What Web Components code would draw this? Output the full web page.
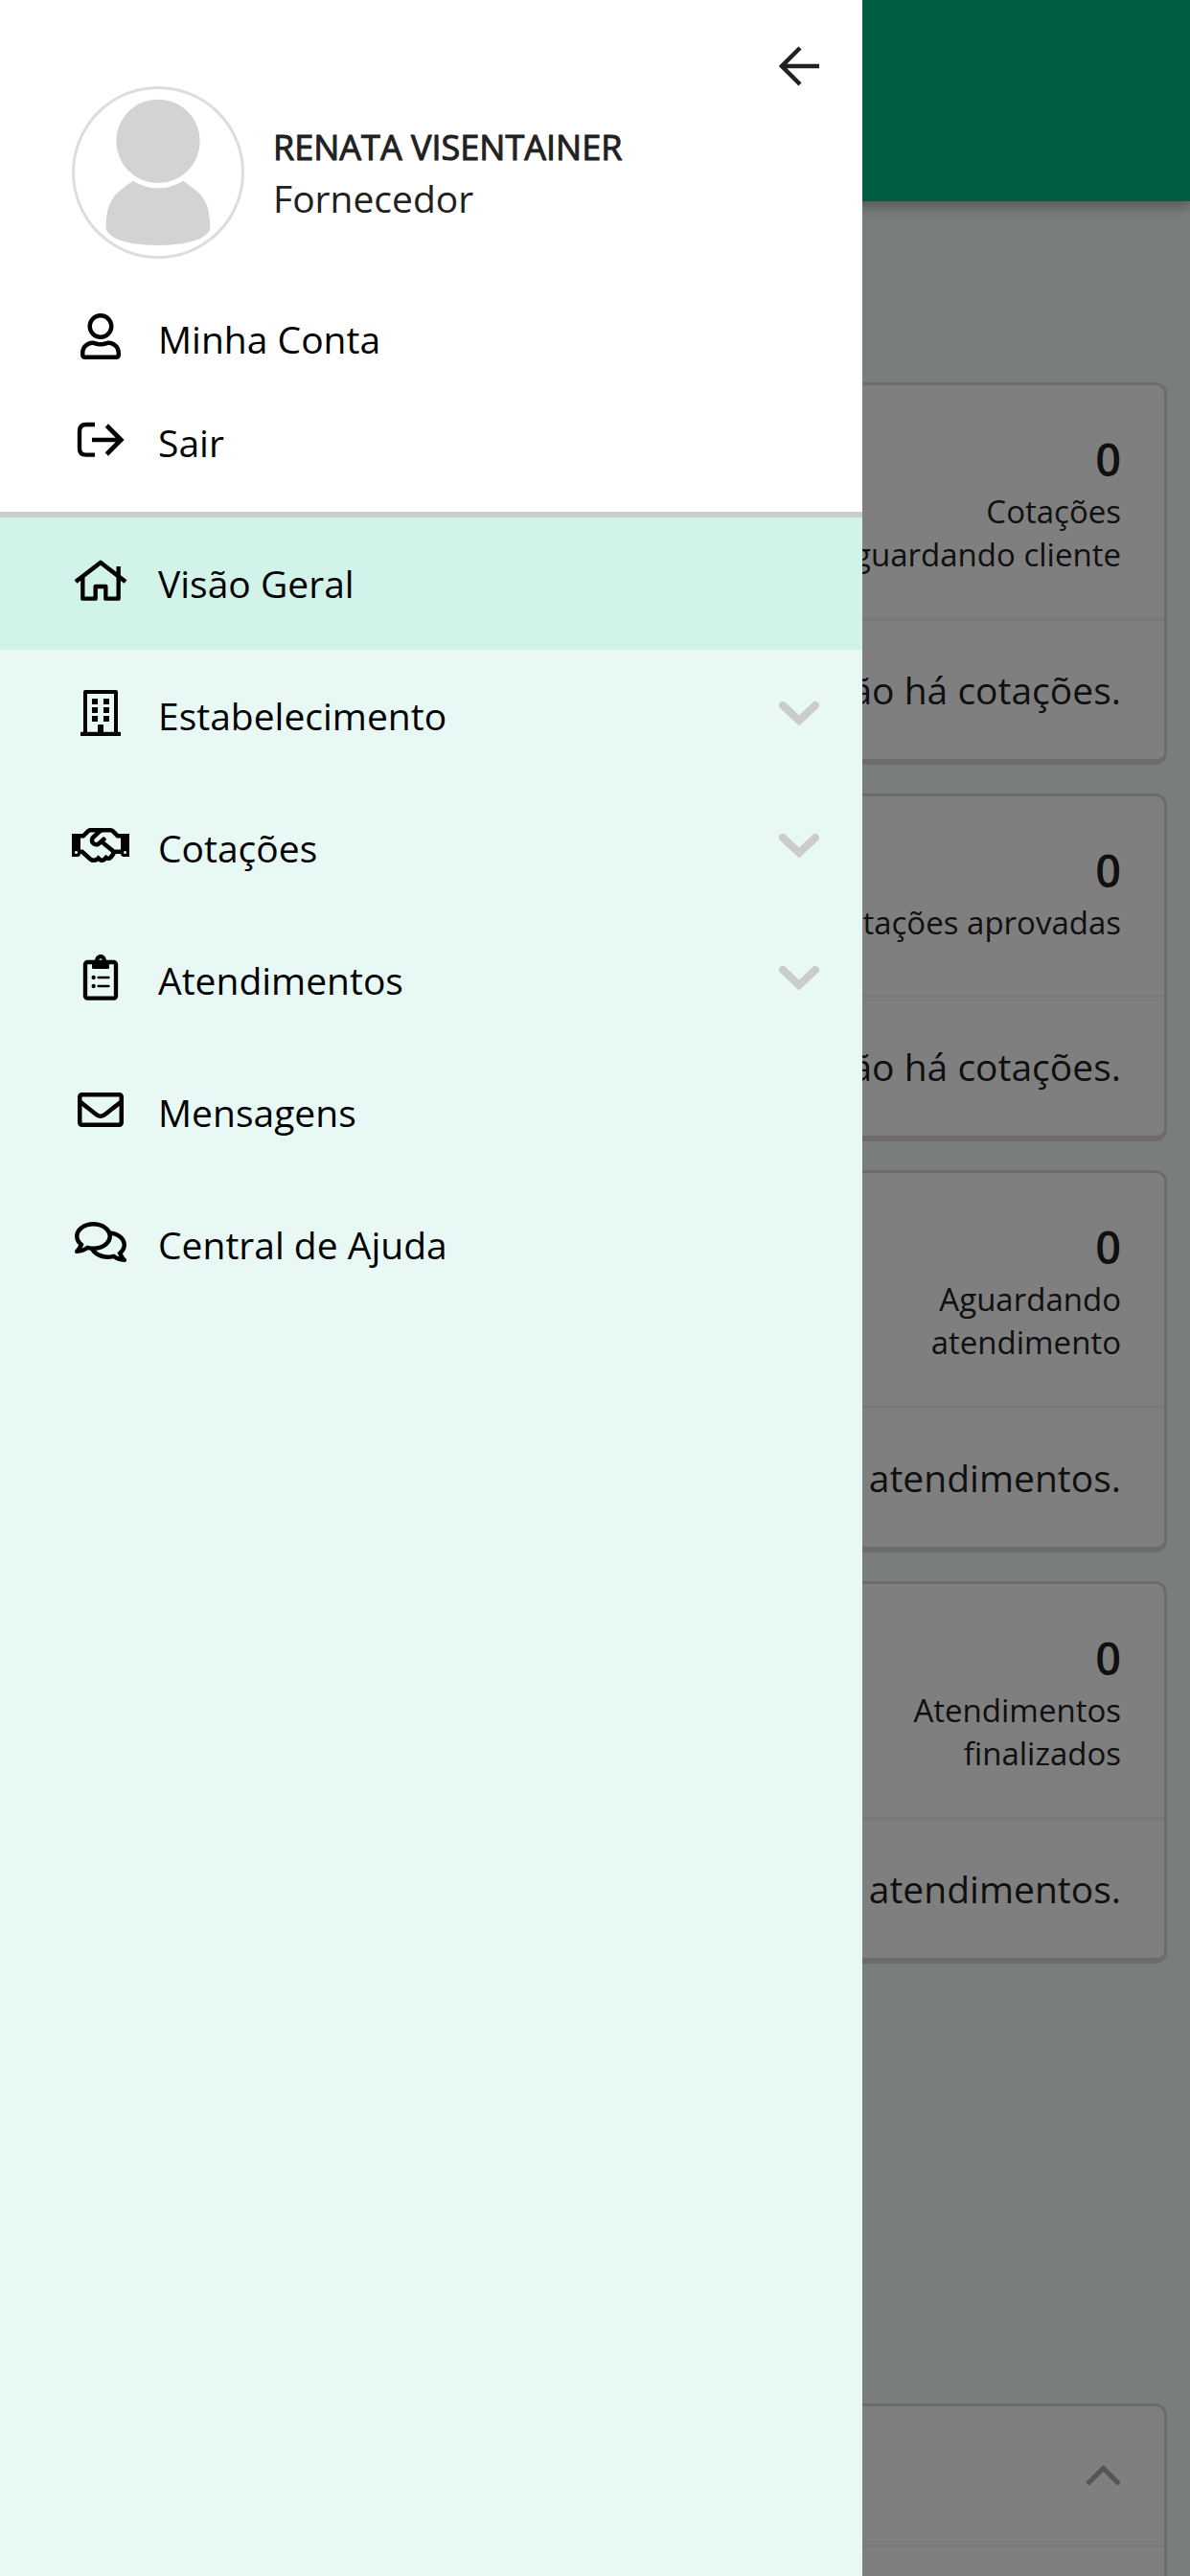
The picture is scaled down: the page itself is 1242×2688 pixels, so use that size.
<!DOCTYPE html>
<html lang="pt-BR">
<head>
<meta charset="utf-8">
<meta name="viewport" content="width=device-width, initial-scale=1">
<title>Visão Geral</title>
<style>
  body { margin: 0; font: 39px/54px "Open Sans", "Noto Sans", sans-serif; color: #212121; }
</style>
</head>
<body>
<app-shell>
  <summary-card slot="content" count="0" label="Cotações aguardando cliente">Não há cotações.</summary-card>
  <summary-card slot="content" count="0" label="Cotações aprovadas">Não há cotações.</summary-card>
  <summary-card slot="content" count="0" label="Aguardando atendimento">Não há atendimentos.</summary-card>
  <summary-card slot="content" count="0" label="Atendimentos finalizados">Não há atendimentos.</summary-card>
  <collapse-panel slot="content"></collapse-panel>

  <side-drawer slot="drawer">
    <user-profile slot="account" name="RENATA VISENTAINER">Fornecedor</user-profile>
    <menu-item slot="account" icon="user" compact>Minha Conta</menu-item>
    <menu-item slot="account" icon="exit" compact>Sair</menu-item>
    <menu-item icon="home" active>Visão Geral</menu-item>
    <menu-item icon="building" expandable>Estabelecimento</menu-item>
    <menu-item icon="handshake" expandable>Cotações</menu-item>
    <menu-item icon="clipboard" expandable>Atendimentos</menu-item>
    <menu-item icon="envelope">Mensagens</menu-item>
    <menu-item icon="comments">Central de Ajuda</menu-item>
  </side-drawer>
</app-shell>

<script>
const ICONS = {
  user: ['-96 0 640 512', '<path d="M313.6 304c-28.7 0-42.5 16-89.6 16-47.1 0-60.8-16-89.6-16C60.2 304 0 364.2 0 438.4V464c0 26.5 21.5 48 48 48h352c26.5 0 48-21.5 48-48v-25.6c0-74.2-60.2-134.4-134.4-134.4zM400 464H48v-25.6c0-47.6 38.8-86.4 86.4-86.4 14.6 0 38.3 16 89.6 16 51.7 0 74.9-16 89.6-16 47.6 0 86.4 38.8 86.4 86.4V464zM224 288c79.5 0 144-64.5 144-144S303.5 0 224 0 80 64.5 80 144s64.5 144 144 144zm0-240c52.9 0 96 43.1 96 96s-43.1 96-96 96-96-43.1-96-96 43.1-96 96-96z"/>'],
  exit: ['45 375 180 144', '<g fill="none" stroke="currentColor" stroke-width="13"><path d="M117 399H90Q69 399 69 420V474Q69 494 90 494H117"/><path d="M108 447H198M154 402L199 447L154 492" stroke-width="14"/></g>'],
  home: ['45 816 180 144', '<g fill="none" stroke="currentColor" stroke-width="13" stroke-linejoin="round"><path d="M57 891L135 831L213 891" stroke-width="14"/><path d="M79 878V944H119V906H151V944H191V878"/><path d="M191 843V880" stroke-width="13"/></g>'],
  building: ['45 120 180 144', '<path d="M87 257V126H183V257" fill="none" stroke="currentColor" stroke-width="12" stroke-linejoin="round"/><path d="M72 253q0-2 3-2H195q3 0 3 2v11H72zM108 147h18v18h-18zM144 147h18v18h-18zM108 174h18v18h-18zM144 174h18v18h-18zM108 201h18v18h-18zM144 201h18v18h-18zM126 231q0-3 3-3h12q3 0 3 3v24h-18z"/>'],
  handshake: ['0 0 640 512', '<path d="M519.2 127.9l-47.6-47.6A56.252 56.252 0 0 0 432 64H205.2c-14.8 0-29.1 5.9-39.6 16.3L118 127.9H0v255.7h64c17.6 0 31.8-14.2 31.9-31.7h9.1l84.6 76.4c30.9 25.1 73.8 25.7 105.6 3.8 12.5 10.8 26 15.9 41.1 15.9 18.2 0 35.3-7.4 48.8-24 22.1 8.7 48.2 2.6 64-16.8l26.2-32.3c5.6-6.9 9.1-14.8 10.9-23h57.9c.1 17.5 14.4 31.7 31.9 31.7h64V127.9H519.2zM48 351.6c-8.8 0-16-7.2-16-16s7.2-16 16-16 16 7.2 16 16c0 8.9-7.2 16-16 16zm390-6.9l-26.1 32.2c-2.8 3.4-7.8 4-11.3 1.2l-23.9-19.4-30 36.5c-6 7.3-15 4.8-18 2.4l-36.8-31.5-15.6 19.2c-13.9 17.1-39.2 19.7-55.3 6.6l-97.3-88H96V175.8h41.9l61.7-61.6c2-.8 3.7-1.5 5.7-2.3H262l-38.7 35.5c-29.4 26.9-31.1 72.3-4.4 101.3 14.8 16.2 61.2 41.2 101.5 4.4l8.2-7.5 108.2 87.8c3.4 2.8 3.9 7.9 1.2 11.3zm106-40.8h-69.2c-2.3-2.8-4.9-5.4-7.7-7.7l-102.7-83.4 12.5-11.4c6.5-6 7-16.1 1-22.6L367 167.1c-6-6.5-16.1-6.9-22.6-1l-55.2 50.6c-9.5 8.7-25.7 9.4-34.6 0-9.3-9.9-8.5-25.1 1.2-33.9l65.6-60.1c7.4-6.8 17-10.5 27-10.5l83.7-.2c2.1 0 4.1.8 5.5 2.3l61.7 61.6H544v128zm48 47.7c-8.8 0-16-7.2-16-16s7.2-16 16-16 16 7.2 16 16c0 8.9-7.2 16-16 16z"/>'],
  clipboard: ['45 108 180 144', '<rect x="87" y="132" width="96" height="113" rx="7" fill="none" stroke="currentColor" stroke-width="13"/><path fill-rule="evenodd" d="M108 130H117C117 115 126 108 135 108S153 115 153 130H162V149Q162 153 158 153H112Q108 153 108 149ZM135 121a5 5 0 1 0 0 10a5 5 0 1 0 0-10Z"/><circle cx="113" cy="180" r="6.5"/><circle cx="113" cy="207" r="6.5"/><path d="M128 180H160M128 207H160" stroke="currentColor" stroke-width="8" stroke-linecap="round"/>'],
  envelope: ['-64 0 640 512', '<path d="M464 64H48C21.49 64 0 85.49 0 112v288c0 26.51 21.49 48 48 48h416c26.51 0 48-21.49 48-48V112c0-26.51-21.49-48-48-48zm0 48v40.805c-22.422 18.259-58.168 46.651-134.587 106.49-16.841 13.247-50.201 45.072-73.413 44.701-23.208.375-56.579-31.459-73.413-44.701C106.18 199.465 70.425 171.067 48 152.805V112h416zM48 400V214.398c22.914 18.251 55.409 43.862 104.938 82.646 21.857 17.205 60.134 55.186 103.062 54.955 42.717.231 80.509-37.199 103.053-54.947 49.528-38.783 82.032-64.401 104.947-82.653V400H48z"/>'],
  comments: ['-32 0 640 512', '<path d="M532 386.2c27.5-27.1 44-61.1 44-98.2 0-80-76.5-146.1-176.2-157.9C368.3 72.5 294.3 32 208 32 93.1 32 0 103.6 0 192c0 37 16.5 71 44 98.2-15.3 30.7-37.3 54.5-37.7 54.9-6.3 6.7-8.1 16.5-4.4 25 3.6 8.5 12 14 21.2 14 53.5 0 96.7-20.2 125.2-38.8 9.2 2.1 18.7 3.7 28.4 4.9C208.1 407.6 281.8 448 368 448c20.8 0 40.8-2.4 59.8-6.8C456.3 459.7 499.4 480 553 480c9.2 0 17.5-5.5 21.2-14 3.6-8.5 1.9-18.3-4.4-25-.4-.3-22.5-24.1-37.8-54.8zm-392.8-92.3L122.1 305c-14.1 9.1-28.5 16.3-43.1 21.4 2.7-4.7 5.4-9.7 8-14.8l15.5-31.1L77.7 256C64.2 242.6 48 220.7 48 192c0-60.7 73.3-112 160-112s160 51.3 160 112-73.3 112-160 112c-16.5 0-33-1.9-49-5.6l-19.8-4.5zM498.3 352l-24.7 24.4 15.5 31.1c2.6 5.1 5.3 10.1 8 14.8-14.6-5.1-29-12.3-43.1-21.4l-17.1-11.1-19.9 4.6c-16 3.7-32.5 5.6-49 5.6-54 0-102.2-20.1-131.3-49.7C338 339.5 416 272.9 416 192c0-3.4-.4-6.7-.7-10C479.7 196.5 528 238.8 528 288c0 28.7-16.2 50.6-29.7 64z"/>']
};

class Base extends HTMLElement {
  connectedCallback() {
    if (this.shadowRoot) return;
    this.attachShadow({ mode: 'open' }).innerHTML =
      '<style>*{box-sizing:border-box}:host{display:block;box-sizing:border-box}svg{display:block;flex:none}</style>' + this.render();
  }
}

customElements.define('app-shell', class extends Base {
  render() {
    return `<style>
      :host { height: 100vh; overflow: hidden; display: flex; flex-direction: column; background: #f3fcf8; }
      header { flex: none; height: 210px; background: #00bb86; box-shadow: 0 6px 12px rgba(0,0,0,.3); }
      main { flex: 1; min-height: 0; display: flex; flex-direction: column; gap: 30px; padding: 189px 24px 0; }
      .overlay { position: fixed; inset: 0; background: rgba(0,0,0,.5); }
    </style>
    <header></header>
    <main><slot name="content"></slot></main>
    <div class="overlay"></div>
    <slot name="drawer"></slot>`;
  }
});

customElements.define('summary-card', class extends Base {
  render() {
    return `<style>
      :host { flex: none; background: #fff; border: 3px solid #dcd8d6; border-bottom-width: 6px; border-radius: 12px; text-align: right; }
      .head { min-height: 210px; padding: 45px 45px 44px; display: flex; flex-direction: column; align-items: flex-end; border-bottom: 3px solid #f2f2f2; }
      .count { font-size: 47px; line-height: 64px; font-weight: 600; }
      .label { max-width: 330px; font-size: 33px; line-height: 45px; }
      .foot { padding: 45px; }
    </style>
    <div class="head"><div class="count">${this.getAttribute('count')}</div><div class="label">${this.getAttribute('label')}</div></div>
    <div class="foot"><slot></slot></div>`;
  }
});

customElements.define('collapse-panel', class extends Base {
  render() {
    return `<style>
      :host { flex: 1; margin-top: 429px; background: #fff; border: 3px solid #dcd8d6; border-bottom: 0; border-radius: 12px 12px 0 0; }
      button { width: 100%; height: 147px; padding: 0 45px; display: flex; justify-content: flex-end; align-items: center; background: none; border: 0; border-bottom: 3px solid #f2f2f2; }
    </style>
    <button aria-label="Recolher"><svg width="37" height="22" viewBox="0 0 37 22"><path d="M2 20L18.5 3.500L35 20" fill="none" stroke="#aaa" stroke-width="5"/></svg></button>`;
  }
});

customElements.define('side-drawer', class extends Base {
  render() {
    return `<style>
      :host { position: fixed; top: 0; bottom: 0; left: 0; width: 900px; max-width: 100%; overflow: hidden; background: #e8f9f5; }
      .account { background: #fff; border-bottom: 6px solid #ccc; padding: 48px 0 18px; }
      .close { display: flex; justify-content: flex-end; padding-right: 45px; }
      button { display: block; border: 0; padding: 0; background: none; color: #212121; }
    </style>
    <section class="account">
      <div class="close"><button aria-label="Fechar menu"><svg width="42" height="42" viewBox="0 0 42 42"><path d="M22 2L3 21L22 40M3 21H42" fill="none" stroke="currentColor" stroke-width="4.5"/></svg></button></div>
      <slot name="account"></slot>
    </section>
    <nav><slot></slot></nav>`;
  }
});

customElements.define('user-profile', class extends Base {
  render() {
    return `<style>
      :host { display: flex; align-items: center; gap: 30px; padding: 0 45px 0 75px; margin-bottom: 30px; }
      .text { line-height: 53px; }
      .name { font-size: 36px; -webkit-text-stroke: 1px currentColor; }
    </style>
    <svg width="180" height="180" viewBox="45 30 540 540"><circle cx="315" cy="300" r="265.5" fill="#fff" stroke="#ddd" stroke-width="9"/><g fill="#d3d3d3"><circle cx="315" cy="202" r="131"/><path d="M236 326Q315 372 394 326C436 358 478 374 478 470C478 508 400 528 315 528S152 508 152 470C152 374 194 358 236 326Z"/></g></svg>
    <div class="text"><div class="name">${this.getAttribute('name')}</div><div><slot></slot></div></div>`;
  }
});

customElements.define('menu-item', class extends Base {
  render() {
    const [box, art] = ICONS[this.getAttribute('icon')];
    const more = this.hasAttribute('expandable');
    const tag = more ? 'button type="button" aria-expanded="false"' : 'a href="#"';
    const chevron = more ? '<svg width="42" height="27" viewBox="0 0 42 27"><path d="M4 5L21 21L38 5" fill="none" stroke="#ccc" stroke-width="8" stroke-linecap="round"/></svg>' : '';
    return `<style>
      .row { width: 100%; height: 138px; padding: 0 45px 0 75px; display: flex; align-items: center; gap: 30px; border: 0; background: none; font: inherit; color: #000; text-align: left; text-decoration: none; }
      :host([compact]) .row { height: 108px; }
      :host([active]) .row { background: #d2f3e9; }
      svg { margin-bottom: 6px; }
      .label { flex: 1; }
    </style>
    <${tag} class="row"><svg width="60" height="48" viewBox="${box}" fill="currentColor">${art}</svg><span class="label"><slot></slot></span>${chevron}</${more ? 'button' : 'a'}>`;
  }
});
</script>
</body>
</html>
